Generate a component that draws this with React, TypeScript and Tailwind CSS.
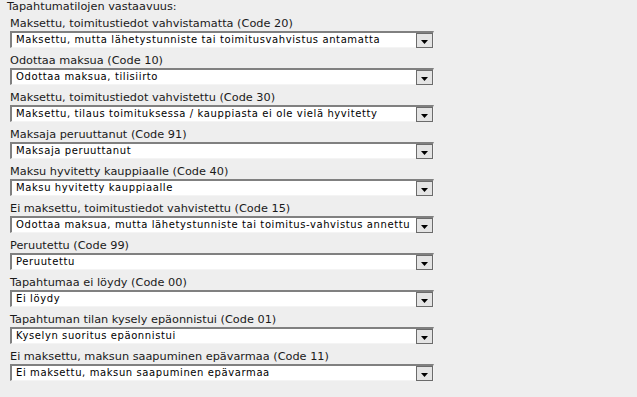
import React from "react";

const rows: [string, string][] = [
  ["Maksettu, toimitustiedot vahvistamatta (Code 20)", "Maksettu, mutta lähetystunniste tai toimitusvahvistus antamatta"],
  ["Odottaa maksua (Code 10)", "Odottaa maksua, tilisiirto"],
  ["Maksettu, toimitustiedot vahvistettu (Code 30)", "Maksettu, tilaus toimituksessa / kauppiasta ei ole vielä hyvitetty"],
  ["Maksaja peruuttanut (Code 91)", "Maksaja peruuttanut"],
  ["Maksu hyvitetty kauppiaalle (Code 40)", "Maksu hyvitetty kauppiaalle"],
  ["Ei maksettu, toimitustiedot vahvistettu (Code 15)", "Odottaa maksua, mutta lähetystunniste tai toimitus-vahvistus annettu"],
  ["Peruutettu (Code 99)", "Peruutettu"],
  ["Tapahtumaa ei löydy (Code 00)", "Ei löydy"],
  ["Tapahtuman tilan kysely epäonnistui (Code 01)", "Kyselyn suoritus epäonnistui"],
  ["Ei maksettu, maksun saapuminen epävarmaa (Code 11)", "Ei maksettu, maksun saapuminen epävarmaa"],
];

function Arrow() {
  return (
    <svg width="7" height="4" viewBox="0 0 7 4" className="block">
      <path d="M0 0H7L3.5 4Z" fill="#000" />
    </svg>
  );
}

export default function App() {
  return (
    <div
      className="w-[637px] h-[397px] bg-[#eeeeee] pl-[7px] text-[#1a1a1a] overflow-hidden"
      style={{ fontFamily: '"DejaVu Sans", Verdana, sans-serif' }}
    >
      <div className="h-[14px] leading-[14px] text-[11.3px]">Tapahtumatilojen vastaavuus:</div>
      <div className="flex flex-col pt-[3px] pl-[3px]">
        {rows.map(([label, value]) => (
          <div key={label} className="flex flex-col mb-[6px]">
            <div className="h-[14px] leading-[14px] text-[11.3px] whitespace-nowrap">{label}</div>
            <div className="w-[424px] h-[17px] bg-white border-t-2 border-l-2 border-t-[#808080] border-l-[#808080] border-r border-b border-r-[#f4f4f4] border-b-[#f4f4f4] flex items-center">
              <div className="flex-1 pl-[4px] text-[10px] tracking-[0.6px] leading-[14px] text-black whitespace-nowrap overflow-hidden">{value}</div>
              <div className="w-[17px] h-[15px] shrink-0 bg-[#e4e4e4] border border-[#6b6b6b] flex items-end justify-center pb-[3px]">
                <Arrow />
              </div>
            </div>
          </div>
        ))}
      </div>
    </div>
  );
}
